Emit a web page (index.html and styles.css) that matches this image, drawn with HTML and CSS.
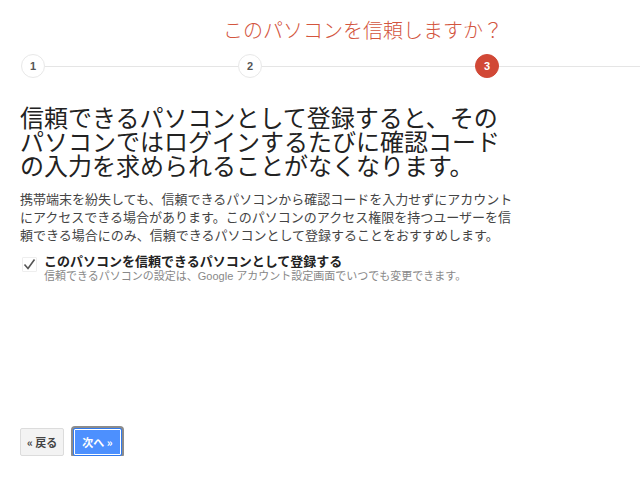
FILE: index.html
```html
<!DOCTYPE html>
<html lang="ja">
<head>
    <meta charset="UTF-8">
    <title>このパソコンを信頼しますか？</title>
    <link rel="stylesheet" href="styles.css">
</head>
<body>
    <div class="wizard">
        <h2 class="wizard__title">このパソコンを信頼しますか？</h2>
        <div class="steps">
            <span class="steps__dot">1</span>
            <span class="steps__line steps__line--a"></span>
            <span class="steps__dot">2</span>
            <span class="steps__line steps__line--b"></span>
            <span class="steps__dot steps__dot--active">3</span>
            <span class="steps__line steps__line--rest"></span>
        </div>
        <div class="wizard__body">
            <h1 class="wizard__lead">信頼できるパソコンとして登録すると、そのパソコンではログインするたびに確認コードの入力を求められることがなくなります。</h1>
            <p class="wizard__text">携帯端末を紛失しても、信頼できるパソコンから確認コードを入力せずにアカウントにアクセスできる場合があります。このパソコンのアクセス権限を持つユーザーを信頼できる場合にのみ、信頼できるパソコンとして登録することをおすすめします。</p>
            <label class="trust">
                <span class="trust__box">
                    <svg width="13" height="13" viewBox="0 0 13 13"><path d="M1.5 6.5 L5 10.5 L11.5 1.5" fill="none" stroke="#555" stroke-width="1.6"/></svg>
                </span>
                <span class="trust__text">
                    <span class="trust__label">このパソコンを信頼できるパソコンとして登録する</span>
                    <span class="trust__hint">信頼できるパソコンの設定は、Google アカウント設定画面でいつでも変更できます。</span>
                </span>
            </label>
            <div class="actions">
                <a href="###" class="btn">« 戻る</a>
                <a href="###" class="btn btn--action">次へ »</a>
            </div>
        </div>
    </div>
</body>
</html>
```

FILE: styles.css
```css
body {
    margin:0;
    background:#fff;
    font-family:"Noto Sans CJK JP", "Liberation Sans", sans-serif;
    color:#222;
}
.wizard__title {
    margin:0;
    padding:18px 0 0 223px;
    font-size:20px;
    line-height:24px;
    font-weight:300;
    color:#d3553e;
}
.steps {
    display:flex;
    align-items:center;
    margin-top:12px;
    padding-left:21px;
    height:24px;
}
.steps__dot {
    flex:none;
    width:22px;
    height:22px;
    border:1px solid #e8e8e8;
    border-radius:50%;
    background:#fff;
    font:bold 11px/22px "Liberation Sans", sans-serif;
    color:#555;
    text-align:center;
}
.steps__dot--active {
    background:#d14836;
    border-color:#d14836;
    color:#fff;
}
.steps__line {
    height:1px;
    background:#e5e5e5;
}
.steps__line--a { width:193px; }
.steps__line--b { width:213px; }
.steps__line--rest { flex:1; }
.wizard__body {
    padding:0 20px;
}
.wizard__lead {
    margin:27px 0 0;
    width:490px;
    font-size:24px;
    line-height:24px;
    font-weight:400;
    color:#222;
}
.wizard__text {
    margin:13px 0 0;
    width:500px;
    font-size:13px;
    line-height:18px;
    color:#444;
}
.trust {
    display:flex;
    margin-top:10px;
    font-family:"Liberation Sans", "Noto Sans CJK JP", sans-serif;
}
.trust__box {
    flex:none;
    width:13px;
    height:13px;
    margin:3px 7px 0 2px;
    border:1px solid #eee;
    border-radius:1px;
}
.trust__box svg { display:block; }
.trust__text {
    display:flex;
    flex-direction:column;
}
.trust__label {
    font-size:13px;
    line-height:15px;
    font-weight:bold;
    color:#222;
}
.trust__hint {
    font-size:11px;
    line-height:14px;
    color:#888;
}
.actions {
    display:flex;
    gap:9px;
    margin-top:145px;
}
.btn {
    display:block;
    height:26px;
    padding:0 6px;
    border:1px solid #dcdcdc;
    border-radius:2px;
    background:#f3f3f3;
    font:bold 11px/26px "Noto Sans CJK JP", "Liberation Sans", sans-serif;
    color:#444;
    text-decoration:none;
}
.btn--action {
    padding:0 8px;
    border-color:#3079ed;
    background:#4d90fe;
    color:#fff;
    box-shadow:inset 0 0 0 1px #fff, 0 0 0 2px #8c8c8c;
}
```
